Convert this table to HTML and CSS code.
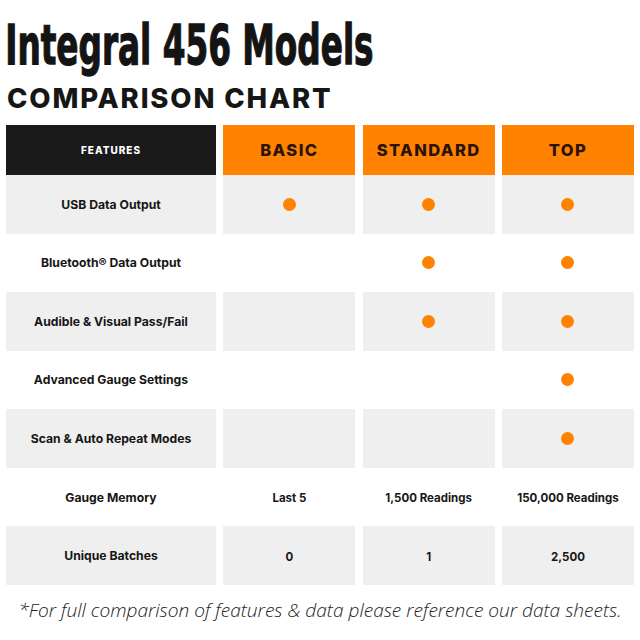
FILE: index.html
```html
<!DOCTYPE html>
<html>
<head>
<meta charset="utf-8">
<link rel="stylesheet" href="styles.css">
</head>
<body>
<div class="page">
  <h1 class="title">Integral 456 Models</h1>
  <h2 class="subtitle">COMPARISON CHART</h2>
  <div class="chart">
    <div class="hd hd-dark">FEATURES</div>
    <div class="hd hd-orange">BASIC</div>
    <div class="hd hd-orange">STANDARD</div>
    <div class="hd hd-orange">TOP</div>

    <div class="cell grey feat">USB Data Output</div>
    <div class="cell grey"><span class="dot"></span></div>
    <div class="cell grey"><span class="dot"></span></div>
    <div class="cell grey"><span class="dot"></span></div>

    <div class="cell feat">Bluetooth® Data Output</div>
    <div class="cell"></div>
    <div class="cell"><span class="dot"></span></div>
    <div class="cell"><span class="dot"></span></div>

    <div class="cell grey feat">Audible &amp; Visual Pass/Fail</div>
    <div class="cell grey"></div>
    <div class="cell grey"><span class="dot"></span></div>
    <div class="cell grey"><span class="dot"></span></div>

    <div class="cell feat">Advanced Gauge Settings</div>
    <div class="cell"></div>
    <div class="cell"></div>
    <div class="cell"><span class="dot"></span></div>

    <div class="cell grey feat">Scan &amp; Auto Repeat Modes</div>
    <div class="cell grey"></div>
    <div class="cell grey"></div>
    <div class="cell grey"><span class="dot"></span></div>

    <div class="cell feat">Gauge Memory</div>
    <div class="cell val">Last 5</div>
    <div class="cell val">1,500 Readings</div>
    <div class="cell val">150,000 Readings</div>

    <div class="cell grey feat">Unique Batches</div>
    <div class="cell grey val">0</div>
    <div class="cell grey val">1</div>
    <div class="cell grey val">2,500</div>
  </div>
  <p class="note">*For full comparison of features &amp; data please reference our data sheets.</p>
</div>
</body>
</html>
```

FILE: styles.css
```css
html, body {
  margin: 0;
  padding: 0;
  background: #ffffff;
}

.page {
  width: 640px;
  height: 640px;
  overflow: hidden;
  display: flex;
  flex-direction: column;
}

.title {
  margin: 0;
  padding: 14px 0 0 7px;
  height: 58px;
  box-sizing: border-box;
  font-family: "Liberation Sans Narrow", "DejaVu Sans", sans-serif;
  font-stretch: condensed;
  font-weight: 700;
  font-size: 48px;
  line-height: 48px;
  color: #141414;
  letter-spacing: 0;
  -webkit-text-stroke: 1.1px #141414;
  transform: scale(0.757, 1.16);
  transform-origin: left top;
  white-space: nowrap;
}

.subtitle {
  margin: 0;
  padding: 25px 0 0 7px;
  height: 67px;
  box-sizing: border-box;
  font-family: "Inter", "Liberation Sans", sans-serif;
  font-weight: 800;
  font-size: 27.5px;
  line-height: 30px;
  letter-spacing: 1.85px;
  color: #161616;
  white-space: nowrap;
}

.chart {
  margin-left: 6px;
  display: grid;
  grid-template-columns: 210px 132px 132px 132px;
  grid-template-rows: 50px repeat(7, 58.57px);
  column-gap: 7.33px;
  font-family: "Inter", "Liberation Sans", sans-serif;
}

.hd {
  display: flex;
  align-items: center;
  justify-content: center;
  font-weight: 800;
}

.hd-dark {
  background: #1a1a1a;
  color: #ffffff;
  font-size: 10px;
  letter-spacing: 1px;
}

.hd-orange {
  background: #ff8200;
  color: #2a1205;
  font-size: 16.5px;
  letter-spacing: 1.4px;
}

.cell {
  display: flex;
  align-items: center;
  justify-content: center;
  color: #161616;
  font-weight: 700;
}

.grey {
  background: #efefef;
}

.feat {
  font-size: 12.2px;
}

.val {
  font-size: 11.5px;
  padding-top: 2px;
  box-sizing: border-box;
}

.dot {
  display: block;
  width: 13px;
  height: 13px;
  border-radius: 50%;
  background: #ff8200;
}

.note {
  margin: 12px 0 0 0;
  text-align: center;
  font-family: "Open Sans", "Liberation Sans", sans-serif;
  font-style: italic;
  font-weight: 300;
  font-size: 19.1px;
  color: #222222;
  white-space: nowrap;
}
```
